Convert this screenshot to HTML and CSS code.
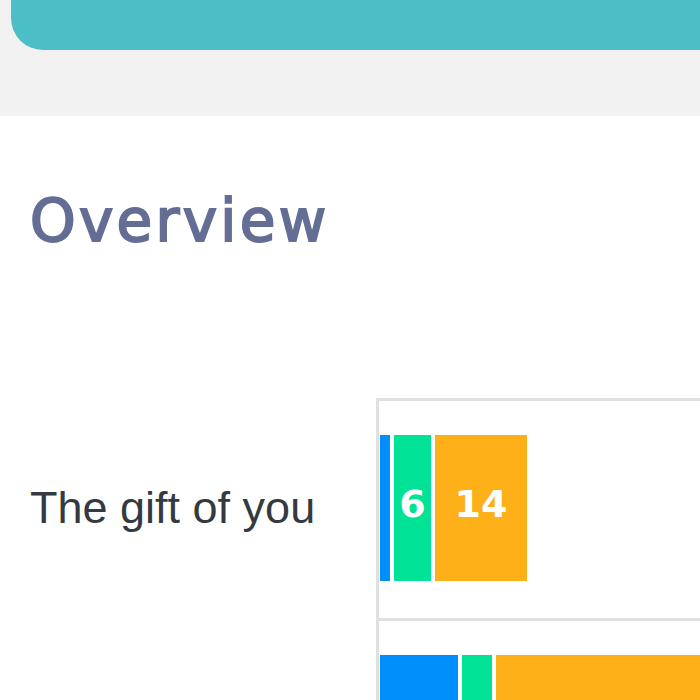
FILE: index.html
```html
<!DOCTYPE html>
<html lang="en">
<head>
<meta charset="utf-8">
<title>Overview</title>
<link rel="stylesheet" href="styles.css">
</head>
<body>
  <div class="top">
    <div class="header"></div>
  </div>
  <main class="main">
    <h1 class="title">Overview</h1>
    <section class="chart">
      <div class="chart-row">
        <div class="label">The gift of you</div>
        <div class="plot">
          <div class="bar bar-blue" style="width:10px"></div>
          <div class="bar bar-green" style="width:37px">6</div>
          <div class="bar bar-orange" style="width:92px">14</div>
        </div>
      </div>
      <div class="chart-row">
        <div class="label"></div>
        <div class="plot">
          <div class="bar bar-blue" style="width:78px"></div>
          <div class="bar bar-green" style="width:30px"></div>
          <div class="bar bar-orange" style="width:320px"></div>
        </div>
      </div>
    </section>
  </main>
</body>
</html>
```
FILE: styles.css
```css
html, body {
  margin: 0;
  padding: 0;
  background: #ffffff;
  overflow: hidden;
}

body {
  font-family: "Liberation Sans", Arial, sans-serif;
}

.top {
  background: #f2f2f2;
  height: 116px;
  padding-left: 11px;
  box-sizing: border-box;
}

.header {
  height: 50px;
  background: #4bbfc5;
  border-bottom-left-radius: 32px;
}

.main {
  padding: 71px 0 0 30px;
}

.title {
  margin: 0 0 143px;
  font-family: "DejaVu Sans", sans-serif;
  font-weight: normal;
  font-size: 58px;
  line-height: 68px;
  letter-spacing: 3.3px;
  color: #646e94;
  -webkit-text-stroke: 2px #646e94;
}

.chart-row {
  display: grid;
  grid-template-columns: 346px 1fr;
}

.label {
  display: flex;
  align-items: center;
  font-size: 45px;
  color: #343a40;
  white-space: nowrap;
}

.plot {
  border-top: 3px solid #e0e0e0;
  border-left: 3px solid #e0e0e0;
  box-sizing: border-box;
  height: 220px;
  padding: 34px 0 37px 1px;
  display: flex;
  gap: 4px;
  overflow: hidden;
}

.bar {
  flex: none;
  box-shadow: 0 0 0 4px #ffffff;
  display: flex;
  align-items: center;
  justify-content: center;
  padding-bottom: 8px;
  box-sizing: border-box;
  color: #ffffff;
  font-family: "DejaVu Sans", sans-serif;
  font-weight: bold;
  font-size: 38px;
}

.bar-blue {
  background: #008ffb;
}

.bar-green {
  background: #00e396;
}

.bar-orange {
  background: #feb019;
}
```
